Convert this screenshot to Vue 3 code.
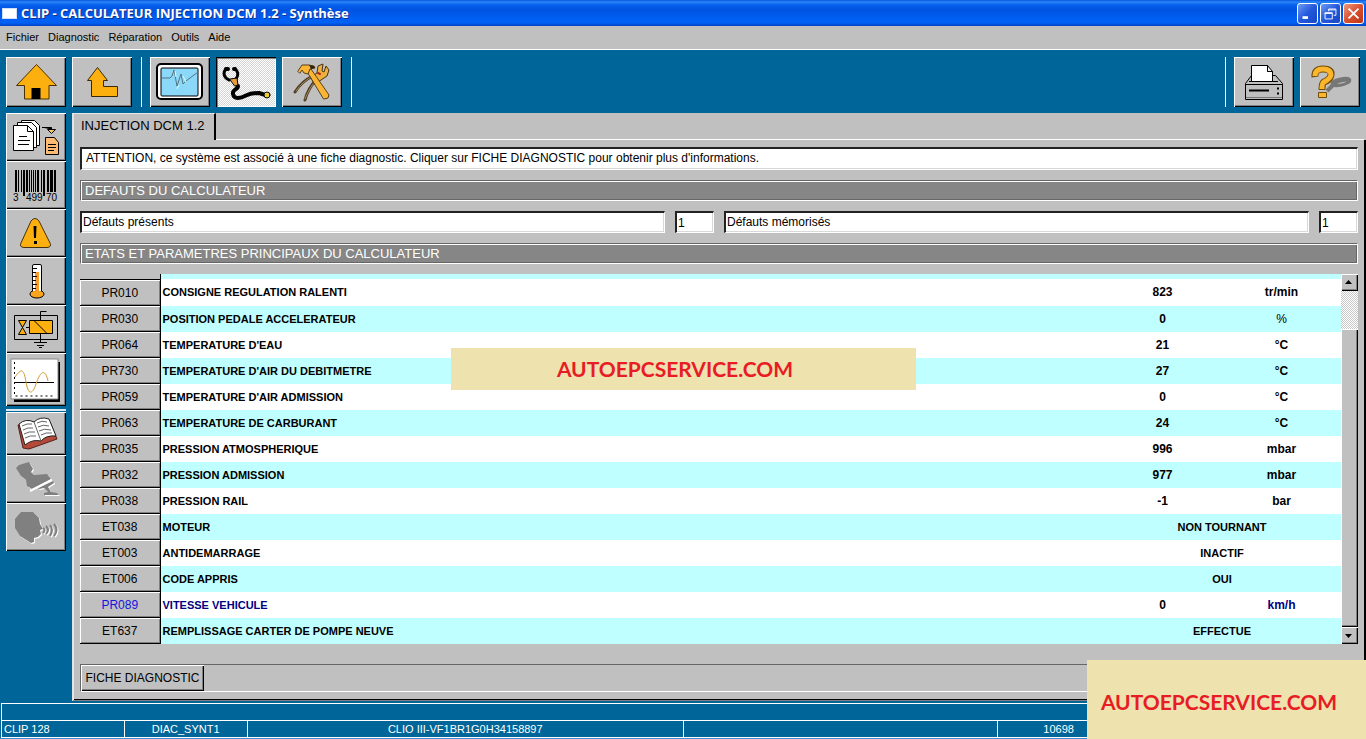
<script setup>
const menus = ['Fichier', 'Diagnostic', 'Réparation', 'Outils', 'Aide']
const bars = [0, 3, 6, 8, 11, 14, 16, 18, 20, 22, 26, 28, 32, 35, 39]
const barWidths = [2, 1, 1, 2, 2, 1, 1, 1, 1, 2, 1, 2, 2, 3, 2]
const rows = [
  { code: 'PR010', name: 'CONSIGNE REGULATION RALENTI', value: '823', unit: 'tr/min' },
  { code: 'PR030', name: 'POSITION PEDALE ACCELERATEUR', value: '0', unit: '%' },
  { code: 'PR064', name: "TEMPERATURE D'EAU", value: '21', unit: '°C' },
  { code: 'PR730', name: "TEMPERATURE D'AIR DU DEBITMETRE", value: '27', unit: '°C' },
  { code: 'PR059', name: "TEMPERATURE D'AIR ADMISSION", value: '0', unit: '°C' },
  { code: 'PR063', name: 'TEMPERATURE DE CARBURANT', value: '24', unit: '°C' },
  { code: 'PR035', name: 'PRESSION ATMOSPHERIQUE', value: '996', unit: 'mbar' },
  { code: 'PR032', name: 'PRESSION ADMISSION', value: '977', unit: 'mbar' },
  { code: 'PR038', name: 'PRESSION RAIL', value: '-1', unit: 'bar' },
  { code: 'ET038', name: 'MOTEUR', value: 'NON TOURNANT' },
  { code: 'ET003', name: 'ANTIDEMARRAGE', value: 'INACTIF' },
  { code: 'ET006', name: 'CODE APPRIS', value: 'OUI' },
  { code: 'PR089', name: 'VITESSE VEHICULE', value: '0', unit: 'km/h', blue: true },
  { code: 'ET637', name: 'REMPLISSAGE CARTER DE POMPE NEUVE', value: 'EFFECTUE' }
]
</script>

<template>
  <div class="app">
    <header class="titlebar">
      <span class="app-icon"></span>
      <h1>CLIP - CALCULATEUR INJECTION DCM 1.2 - Synthèse</h1>
      <div class="win-buttons">
        <button aria-label="Réduire"><svg viewBox="0 0 21 21"><path d="M5 15h6" stroke="#fff" stroke-width="3" /></svg></button>
        <button aria-label="Restaurer"><svg viewBox="0 0 21 21" fill="none" stroke="#fff"><path d="M8.500 8V5.500h8v7H14M8 6.500h8" /><path d="M4.500 9.500h8v7h-8zM4 10.500h8" /></svg></button>
        <button class="close" aria-label="Fermer"><svg viewBox="0 0 21 21"><path d="M5 5l11 11M16 5L5 16" stroke="#fff" stroke-width="2" /></svg></button>
      </div>
    </header>

    <nav class="menubar">
      <button v-for="m in menus" :key="m">{{ m }}</button>
    </nav>

    <div class="toolbar">
      <button class="tool" aria-label="Accueil">
        <svg viewBox="0 0 60 50"><path d="M30.500 7.500L10.500 28.500H18.500V42H43V28.500H50.500Z" fill="#fcb010" stroke="#4a3000" /><path d="M25.500 31h9v11h-9z" fill="#000" /></svg>
      </button>
      <button class="tool" aria-label="Retour">
        <svg viewBox="0 0 60 50"><path d="M25.500 10.500L15.500 23.500H19.500V39.500H45.500V29.500H31.500V23.500H35.500Z" fill="#fcb010" stroke="#3a2800" /></svg>
      </button>
      <span class="sep"></span>
      <button class="tool" aria-label="Écran">
        <svg viewBox="0 0 60 50">
          <rect x="7" y="7" width="45" height="35" rx="4" fill="#fff" stroke="#000" stroke-width="2" />
          <rect x="11" y="11" width="37" height="28" rx="1" fill="#8cd8f8" stroke="#000" />
          <path d="M12 21h8l2-2 2-6 3 16 4-12 2 10 3-3 12-9" fill="none" stroke="#537583" />
          <path d="M25 14l1 6M33 19l3 6M27 32l2-4" stroke="#d8ffff" />
        </svg>
      </button>
      <button class="tool pressed" aria-label="Synthèse">
        <svg viewBox="0 0 60 50" fill="none" stroke="#000" stroke-linecap="round" stroke-linejoin="round">
          <path d="M22 29C22 33 16 32 17 37C18 43 25 41 30 38.500S38 36 43 36L51 38.500" stroke-width="4" />
          <path d="M10 12C7 15 7 20 13 23M19 12C22 14 23 18 20 22" stroke-width="3" />
          <path d="M10 12h2M18 12h1" stroke-width="4" />
          <path d="M14 22l7-1 1 7-3 1z" fill="#e69a38" />
          <circle cx="51" cy="38" r="3" fill="#f0cb38" />
        </svg>
      </button>
      <button class="tool" aria-label="Réparation">
        <svg viewBox="0 0 60 50" stroke-linejoin="round" stroke-linecap="round">
          <path d="M13 35Q20 24 31 19M23 43Q26 31 35 22" stroke="#4d3c24" stroke-width="3" fill="none" />
          <path d="M14 34Q21 24 31 19M23 42Q27 31 35 22" stroke="#a98c60" fill="none" />
          <path d="M29 20l6-4 1-7 5-2-1 7 2 1 2-6 3 4-2 6-6 4-6 4z" fill="#eeb03c" stroke="#493314" />
          <path d="M25 14l4-2 18 26-1 3-4 1z" fill="#fbb532" stroke="#594018" />
          <path d="M16 14l4-6h7l5 1 1 2-5 1-2 5-4-1-2-3-2 3z" fill="#fbb532" stroke="#594018" />
          <path d="M27 8l5 1 1 2-4 1z" fill="#302510" />
          <path d="M36 16l2 1" stroke="#b52a16" stroke-width="2" />
        </svg>
      </button>
      <span class="sep"></span>
      <span class="spacer"></span>
      <span class="sep"></span>
      <button class="tool" aria-label="Imprimer">
        <svg viewBox="0 0 60 50" stroke="#000">
          <path d="M17.500 18.500L11.500 26.500V42.500H48.500V26.500L41.500 18.500Z" fill="#c0c0c0" />
          <path d="M11.500 27.500h37M15 24.500h29" />
          <path d="M17.500 24.500V8.500H33.500V14.500H38.500V24.500Z" fill="#fff" />
          <path d="M33.500 8.500l5 6h-5z" fill="#eee" />
          <path d="M15 33.500h20M43 31.500h2M43 36.500h2" stroke-width="2" />
          <path d="M12 40.500h36" stroke="#777" />
        </svg>
      </button>
      <button class="tool" aria-label="Aide">
        <svg viewBox="0 0 60 50" fill="none">
          <path d="M27 34l8-8M33 27q8-5 15-4" stroke="#777" stroke-width="4" />
          <ellipse cx="41" cy="25" rx="9" ry="3" transform="rotate(-12 41 25)" stroke="#777" stroke-width="3" />
          <path d="M15 20Q14 12 23 12Q32 12 31 18Q30 23 24 25Q22 26 22 33" stroke="#714d08" stroke-width="7" />
          <path d="M15 19Q15 12 23 12Q31 12 31 18Q30 22 24 25Q22 26 22 32" stroke="#fcb62c" stroke-width="5" />
          <path d="M18.500 35.500h8v5h-8z" fill="#fcb62c" stroke="#714d08" />
        </svg>
      </button>
    </div>

    <div class="body">
      <aside class="sidebar">
        <button class="side" aria-label="Documents">
          <svg viewBox="0 0 60 48" stroke="#000">
            <path d="M15.500 7.500h13l5 5v20h-18z" fill="#fff" />
            <path d="M11.500 9.500h14l5 5v20h-19z" fill="#fff" />
            <path d="M7.500 12.500h14l6 6v19h-20zM21.500 12.500v6h6" fill="#fff" />
            <path d="M13 23.500h8M12 27.500h12M12 31.500h11M36 14.500h9.500v2" />
            <path d="M41.500 16.500h8l-4 4z" fill="#fcc468" />
            <path d="M39.500 24.500h9l4 5v12h-13z" fill="#fdba73" />
            <path d="M42 31.500h8M42 34.500h8M42 37.500h6" />
          </svg>
        </button>
        <button class="side" aria-label="Identification">
          <svg viewBox="0 0 60 48">
            <rect v-for="(b, i) in bars" :key="b" :x="9 + b" y="9" :width="barWidths[i]" :height="i === 3 || i === 11 ? 26 : 22" />
            <text x="7" y="40">3</text><text x="20" y="40">499</text><text x="40" y="40">70</text>
          </svg>
        </button>
        <button class="side" aria-label="Défauts">
          <svg viewBox="0 0 60 48"><path d="M25 12Q29 7 33 12L44 34Q46 38 41 38.500H18Q13 38 15 34Z" fill="#fcb010" stroke="#463010" /><path d="M27.500 17h3l-.5 12h-2zM28 32h3v3h-3z" fill="#000" /></svg>
        </button>
        <button class="side" aria-label="Paramètres">
          <svg viewBox="0 0 60 48">
            <ellipse cx="31" cy="37" rx="7" ry="4" fill="#fba41c" stroke="#000" />
            <path d="M26.500 34V9Q26.500 7.500 28 7.500H34Q35.500 7.500 35.500 9V34" fill="#fff" stroke="#000" />
            <path d="M29 15h4v20h-4z" fill="#fa9d28" />
            <path d="M27 11.500h4M27 15.500h3M27 19.500h4M27 23.500h3M27 27.500h4M27 31.500h3" stroke="#000" />
          </svg>
        </button>
        <button class="side" aria-label="Commandes">
          <svg viewBox="0 0 60 48" fill="none" stroke="#000">
            <path d="M8.500 10.500h43v24h-43zM20 22.500h4M34.500 16V6.500h6M34.500 29v8" />
            <path d="M23.500 15.500h23v13h-23z" fill="#fcb010" />
            <path d="M28 15.500l13 13" />
            <path d="M12.500 15.500h8l-8 14h8z" fill="#fcb010" />
            <path d="M28 37.500h13M31 40.500h7M33 42.500h3" />
          </svg>
        </button>
        <button class="side tall" aria-label="Oscilloscope">
          <svg viewBox="0 0 60 53" fill="none">
            <path d="M8 9h46v40H8z" fill="#000" />
            <path d="M5 6h47v40H5z" fill="#fff" stroke="#888" />
            <path d="M8.500 9v34H48" stroke="#000" stroke-dasharray="2 3" />
            <path d="M8 29.500h40" stroke="#000" />
            <path d="M9 24C16 14 18 17 20 29S26 43 30 31S39 14 42 28" stroke="#cf9c2e" />
          </svg>
        </button>
        <span class="side-line"></span>
        <button class="side short" aria-label="Documentation">
          <svg viewBox="0 0 60 43" stroke-linejoin="round">
            <path d="M12 13l5 23 6 1 28-10-7-17z" fill="#b54a3b" stroke="#57201a" />
            <path d="M13 12Q20 6 28 10Q34 4 43 7L50 24Q40 23 35 29Q26 27 19 33Z" fill="#fff" stroke="#222" />
            <path d="M28 10l7 19M16 14q5-3 10-2M17 18q5-3 10-2M18 22q5-3 11-2M19 26q5-3 11-2M31 11q5-3 10-1M32 15q5-3 11-1M33 19q5-3 12-1M35 23q5-3 11-2" fill="none" stroke="#666" />
          </svg>
        </button>
        <button class="side" aria-label="Pédale">
          <svg viewBox="0 0 60 48">
            <g v-for="n in 2" :key="n" :class="n === 1 ? 'emboss' : 'shade'">
              <path d="M10 13l3-3 10-3 4 7-2 3 3 3 13-1 4 5-19 10-5-3-1-6-5-4z" />
              <path d="M32 33l15-7 1 2-6 4 3 5 6 1 2 2H38v-2l4-1-4-4-5 1z" />
            </g>
            <path d="M24 36l22-11" stroke="#fff" stroke-width="2" />
          </svg>
        </button>
        <button class="side" aria-label="Assistance vocale">
          <svg viewBox="0 0 60 48">
            <g v-for="n in 2" :key="n" :class="n === 1 ? 'emboss' : 'shade'">
              <path d="M15 9h12l6 6 1 6 3 5-3 1 1 4-3 3-4 1v4l-3 1-11-7-5-8v-9z" />
              <path class="wave" d="M37 25q3 2 0 5M40 23q4 4 0 8M44 22q4 5 0 11M48 21q5 6 0 12" />
            </g>
          </svg>
        </button>
      </aside>

      <main class="panel">
        <div class="tabs"><button class="tab">INJECTION DCM 1.2</button></div>
        <div class="content">
          <p class="field notice">ATTENTION, ce système est associé à une fiche diagnostic. Cliquer sur FICHE DIAGNOSTIC pour obtenir plus d'informations.</p>
          <h2>DEFAUTS DU CALCULATEUR</h2>
          <div class="counts">
            <label class="field" for="presents">Défauts présents</label>
            <input id="presents" class="field" value="1" readonly />
            <label class="field" for="memorises">Défauts mémorisés</label>
            <input id="memorises" class="field" value="1" readonly />
          </div>
          <h2>ETATS ET PARAMETRES PRINCIPAUX DU CALCULATEUR</h2>
          <div class="grid">
            <table>
              <colgroup><col class="c-code" /><col /><col class="c-val" /><col class="c-val" /></colgroup>
              <tbody>
                <tr class="cut" aria-hidden="true"><th></th><td colspan="3"></td></tr>
                <tr v-for="r in rows" :key="r.code" :class="{ blue: r.blue }">
                  <th scope="row"><button>{{ r.code }}</button></th>
                  <td>{{ r.name }}</td>
                  <td class="val" :class="{ state: !r.unit }" :colspan="r.unit ? 1 : 2">{{ r.value }}</td>
                  <td v-if="r.unit" class="unit" :class="{ thin: r.unit === '%' }">{{ r.unit }}</td>
                </tr>
              </tbody>
            </table>
            <div class="scroll">
              <button aria-label="Monter"><svg viewBox="0 0 17 17"><path d="M4 10h7l-3.500-4z" /></svg></button>
              <span class="track"></span>
              <span class="thumb"></span>
              <button aria-label="Descendre"><svg viewBox="0 0 17 17"><path d="M4 7h7l-3.500 4z" /></svg></button>
            </div>
          </div>
          <div class="actions"><button>FICHE DIAGNOSTIC</button></div>
        </div>
      </main>
    </div>

    <footer class="status">
      <div class="message"></div>
      <div class="cells">
        <span class="first">CLIP 128</span><span>DIAC_SYNT1</span><span>CLIO III-VF1BR1G0H34158897</span><span></span><span>10698</span><span></span>
      </div>
    </footer>

    <div class="banner middle">AUTOEPCSERVICE.COM</div>
    <div class="banner corner">AUTOEPCSERVICE.COM</div>
  </div>
</template>

<style>
body { background: #006699; }
</style>

<style scoped>
.app { position: relative; display: flex; flex-direction: column; min-height: 100vh; background: #006699; color: #000; font: 12px/16px "Liberation Sans", Arial, sans-serif; }
* { box-sizing: border-box; }
button { border: 0; padding: 0; margin: 0; background: #c0c0c0; color: inherit; font: inherit; }
svg { display: block; width: 100%; height: 100%; }
h1, h2, p { margin: 0; font-weight: normal; }

.titlebar { display: flex; align-items: center; height: 26px; padding: 0 2px; background: linear-gradient(#0858d8 0, #2a86fa 2px, #0660ee 5px, #0053e0 10px, #0061f6 20px, #0060f2 23px, #0040c0 26px); }
.app-icon { width: 15px; height: 11px; background: #fff; border: 1px solid #cfe0ff; }
h1 { flex: 1; margin-left: 4px; color: #fff; font: bold 13px/26px "Open Sans", "Noto Sans", sans-serif; text-shadow: 1px 1px #0c318e; }
.win-buttons { display: flex; gap: 2px; }
.win-buttons button { width: 21px; height: 21px; border: 1px solid #fff; border-radius: 3px; background: linear-gradient(135deg, #6f9cf5, #2358dc 50%, #1647c5); }
.win-buttons .close { background: linear-gradient(135deg, #ee9a7e, #d9502e 50%, #bc3414); }

.menubar { display: flex; gap: 9px; align-items: center; height: 24px; padding: 0 6px 2px; background: #c0c0c0; border-bottom: 1px solid #fff; font-size: 11px; }

.toolbar { display: flex; gap: 6px; height: 63px; padding: 7px 6px 6px; }
.tool { width: 60px; height: 50px; }
.tool, .side { flex: none; box-shadow: inset 1px 1px #fff, inset -1px -1px #000, inset -2px -2px #808080; }
.pressed { background: repeating-conic-gradient(#fff 0 25%, #d4d4d4 0 50%) 0 0 / 2px 2px; box-shadow: inset 1px 1px #000, inset 2px 2px #808080, inset -1px -1px #fff; }
.sep { width: 2px; height: 50px; margin: 0 2px; border-right: 1px solid #fff; }
.spacer { flex: 1; }

.body { display: flex; flex: 1; }
.sidebar { display: flex; flex-direction: column; width: 72px; padding-left: 6px; }
.side { width: 60px; height: 48px; }
.side.tall { height: 53px; }
.side.short { height: 43px; }
.side-line { width: 60px; height: 2px; margin: 3px 0 1px; background: #dcebf2; }
.side text { font-size: 10px; }
.emboss { fill: #fff; transform: translate(1px, 1px); }
.emboss .wave { fill: none; stroke: #fff; stroke-width: 2; }
.shade { fill: #808080; }
.shade .wave { fill: none; stroke: #808080; stroke-width: 2; }

.panel { display: flex; flex: 1; flex-direction: column; min-width: 0; background: #c0c0c0; border-left: 2px solid #e4e4e4; border-bottom: 1px solid #808080; }
.tabs { display: flex; height: 27px; }
.tabs::after { content: ""; flex: 1; border-bottom: 1px solid #fff; margin-right: 2px; }
.tab { width: 142px; padding: 0 0 2px 7px; text-align: left; border-top: 1px solid #e8e8e8; border-right: 2px solid #000; font-size: 13px; line-height: 22px; }
.content { display: flex; flex: 1; flex-direction: column; padding: 7px 6px 7px; border-right: 2px solid #000; border-bottom: 1px solid #000; }
.field { display: block; min-width: 0; height: 23px; margin: 0; padding: 0 2px; background: #fff; border: 1px solid #fff; border-top: 2px solid #222; border-left: 2px solid #222; border-radius: 0; outline: 0; box-shadow: inset -1px -1px #d8d8d8; color: #000; font: 12px/19px "Liberation Sans", Arial, sans-serif; }
.notice { padding-left: 4px; }
h2 { height: 21px; margin: 10px 0; padding-left: 4px; background: #868686; border: 1px solid #666; border-bottom-color: #fff; border-right-color: #fff; box-shadow: inset 1px 1px #fff, inset -1px -1px #666; color: #fff; font-size: 13px; line-height: 19px; }
.counts { display: grid; grid-template-columns: 1fr 39px 1fr 39px; gap: 10px; }
.counts .field { height: 22px; }
.counts label { padding-left: 1px; }
.counts input { padding-left: 1px; }

.grid { display: flex; }
table { flex: 1; border-collapse: collapse; table-layout: fixed; background: #fff; }
.c-code { width: 80px; }
.c-val { width: 119px; }
tr { height: 26px; }
tr:nth-child(odd) { background: #c0ffff; }
.cut { height: 5px; }
th, td { padding: 0; }
td { padding-left: 2px; font-size: 11px; font-weight: bold; white-space: nowrap; }
.val, .unit { padding: 0; font-size: 12px; text-align: center; }
.state { font-size: 11px; }
.thin { font-weight: normal; }
th { background: #c0c0c0; border-right: 1px solid #000; }
.cut th { border-bottom: 1px solid #000; }
th button { display: block; width: 100%; height: 26px; font: 12px/26px "Liberation Sans", Arial, sans-serif; box-shadow: inset 0 -1px #000, inset 1px 1px #fff, inset -1px -2px #808080; }
.blue, .blue button { color: #1414e0; }
.blue td { color: #000080; }
.blue .val { color: #000; }
.scroll { display: flex; flex-direction: column; width: 17px; }
.scroll button { width: 17px; height: 17px; box-shadow: inset 1px 1px #fff, inset -1px -1px #000, inset -2px -2px #808080; }
.track { height: 38px; background: repeating-conic-gradient(#fff 0 25%, #c8c8c8 0 50%) 0 0 / 2px 2px; }
.thumb { flex: 1; background: #c0c0c0; box-shadow: inset 1px 1px #fff, inset -1px -1px #000, inset -2px -2px #808080; }
.actions { height: 28px; margin-top: auto; border: 1px solid #666; border-right-color: #fff; border-bottom-color: #fff; }
.actions button { width: 123px; height: 26px; font-size: 12px; box-shadow: inset 1px 1px #fff, inset -1px -1px #000, inset -2px -2px #808080; white-space: nowrap; }

.status { margin-top: 2px; padding: 0 1px; color: #fff; font-size: 11px; border-bottom: 1px solid #3c8bd0; }
.message { height: 17px; border-top: 1px solid #fff; border-left: 1px solid #fff; }
.cells { display: grid; grid-template-columns: 9fr 9fr 32fr 23fr 9fr 18fr; height: 18px; border-bottom: 1px solid #fff; }
.cells span { border-top: 1px solid #fff; border-left: 1px solid #fff; text-align: center; line-height: 17px; }
.cells .first { padding-left: 2px; text-align: left; }

.banner { position: absolute; display: flex; align-items: center; justify-content: center; background: #eee2ae; color: #e81c24; font: bold 21px/28px Lato, "Open Sans", sans-serif; }
.middle { top: 348px; left: 0; right: 0; width: 465px; height: 42px; margin: 0 auto; padding-right: 16px; }
.corner { right: 0; bottom: 0; width: 279px; height: 79px; padding: 5px 15px 0 0; }
</style>
